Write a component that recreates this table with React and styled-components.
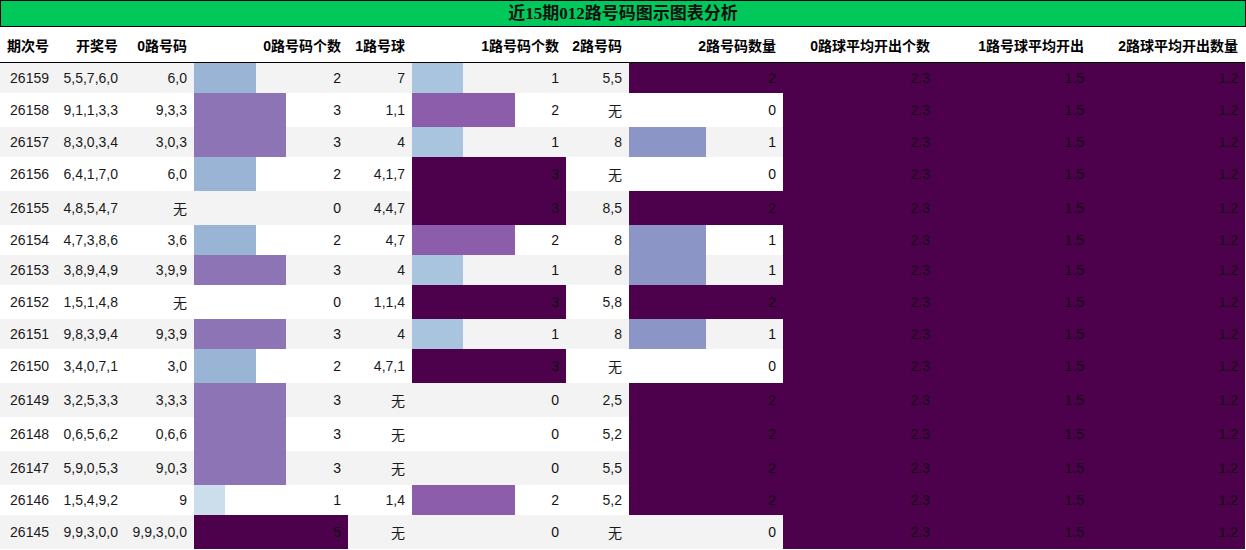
import React from 'react';
import styled, { createGlobalStyle } from 'styled-components';

const GlobalStyle = createGlobalStyle`
  body {
    margin: 0;
    background: #ffffff;
    font-family: "Liberation Sans", "Noto Sans CJK SC", sans-serif;
  }
`;

// BuPu colour map, same stops as matplotlib
const BUPU = ['#f7fcfd', '#e0ecf4', '#bfd3e6', '#9ebcda', '#8c96c6', '#8c6bb1', '#88419d', '#810f7c', '#4d004b'];

const hexToRgb = (h) => [1, 3, 5].map((i) => parseInt(h.slice(i, i + 2), 16));

const bupu = (t) => {
  const x = Math.max(0, Math.min(1, t)) * (BUPU.length - 1);
  const i = Math.min(Math.floor(x), BUPU.length - 2);
  const f = x - i;
  const a = hexToRgb(BUPU[i]);
  const b = hexToRgb(BUPU[i + 1]);
  const c = a.map((v, k) => Math.round(v + (b[k] - v) * f));
  return `rgb(${c.join(',')})`;
};

const widths = [56, 69, 69, 154, 64, 154, 63, 154, 154, 154, 154];

const headers = [
  '期次号', '开奖号', '0路号码', '0路号码个数', '1路号球', '1路号码个数',
  '2路号码', '2路号码数量', '0路球平均开出个数', '1路号球平均开出', '2路球平均开出数量',
];

const rows = [
  [26159, '5,5,7,6,0', '6,0', 2, '7', 1, '5,5', 2],
  [26158, '9,1,1,3,3', '9,3,3', 3, '1,1', 2, '无', 0],
  [26157, '8,3,0,3,4', '3,0,3', 3, '4', 1, '8', 1],
  [26156, '6,4,1,7,0', '6,0', 2, '4,1,7', 3, '无', 0],
  [26155, '4,8,5,4,7', '无', 0, '4,4,7', 3, '8,5', 2],
  [26154, '4,7,3,8,6', '3,6', 2, '4,7', 2, '8', 1],
  [26153, '3,8,9,4,9', '3,9,9', 3, '4', 1, '8', 1],
  [26152, '1,5,1,4,8', '无', 0, '1,1,4', 3, '5,8', 2],
  [26151, '9,8,3,9,4', '9,3,9', 3, '4', 1, '8', 1],
  [26150, '3,4,0,7,1', '3,0', 2, '4,7,1', 3, '无', 0],
  [26149, '3,2,5,3,3', '3,3,3', 3, '无', 0, '2,5', 2],
  [26148, '0,6,5,6,2', '0,6,6', 3, '无', 0, '5,2', 2],
  [26147, '5,9,0,5,3', '9,0,3', 3, '无', 0, '5,5', 2],
  [26146, '1,5,4,9,2', '9', 1, '1,4', 2, '5,2', 2],
  [26145, '9,9,3,0,0', '9,9,3,0,0', 5, '无', 0, '无', 0],
];

const averages = ['2.3', '1.5', '1.2'];

const Page = styled.div`
  width: 1246px;
`;

const Title = styled.div`
  background: #00c85a;
  border: 1px solid #000;
  text-align: center;
  font-family: "Liberation Serif", "Noto Sans CJK SC", serif;
  font-weight: bold;
  font-size: 17px;
  line-height: 25px;
  color: #111;
`;

const Table = styled.table`
  width: 1245px;
  border-collapse: collapse;
  table-layout: fixed;
  font-size: 14px;
  color: #1a1a1a;
`;

const HeadCell = styled.th`
  text-align: right;
  font-weight: bold;
  padding: 8px 7px 7px 0;
  color: #000;
  white-space: nowrap;
  border-bottom: 1px solid #000;
`;

const Row = styled.tr`
  background: ${(p) => (p.$alt ? '#f3f3f3' : '#ffffff')};
`;

const Cell = styled.td`
  text-align: right;
  padding: 7px 7px 7px 0;
  white-space: nowrap;
  vertical-align: middle;
`;

const BarCell = styled(Cell)`
  background-repeat: no-repeat;
  color: #111;
`;

const Bar = ({ value, max }) => {
  const pct = max ? (value / max) * 100 : 0;
  const color = bupu(max ? value / max : 0);
  const style = value > 0
    ? { backgroundImage: `linear-gradient(90deg, ${color} 0%, ${color} ${pct}%, transparent ${pct}%)` }
    : undefined;
  return <BarCell style={style}>{value}</BarCell>;
};

const App = () => {
  const max0 = Math.max(...rows.map((r) => r[3]));
  const max1 = Math.max(...rows.map((r) => r[5]));
  const max2 = Math.max(...rows.map((r) => r[7]));
  return (
    <Page>
      <GlobalStyle />
      <Title>近15期012路号码图示图表分析</Title>
      <Table>
        <colgroup>
          {widths.map((w, i) => <col key={i} style={{ width: w }} />)}
        </colgroup>
        <thead>
          <tr>
            {headers.map((h) => <HeadCell key={h}>{h}</HeadCell>)}
          </tr>
        </thead>
        <tbody>
          {rows.map((r, i) => (
            <Row key={r[0]} $alt={i % 2 === 0}>
              <Cell>{r[0]}</Cell>
              <Cell>{r[1]}</Cell>
              <Cell>{r[2]}</Cell>
              <Bar value={r[3]} max={max0} />
              <Cell>{r[4]}</Cell>
              <Bar value={r[5]} max={max1} />
              <Cell>{r[6]}</Cell>
              <Bar value={r[7]} max={max2} />
              {averages.map((a) => (
                <BarCell key={a} style={{ background: bupu(1) }}>{a}</BarCell>
              ))}
            </Row>
          ))}
        </tbody>
      </Table>
    </Page>
  );
};

export default App;
